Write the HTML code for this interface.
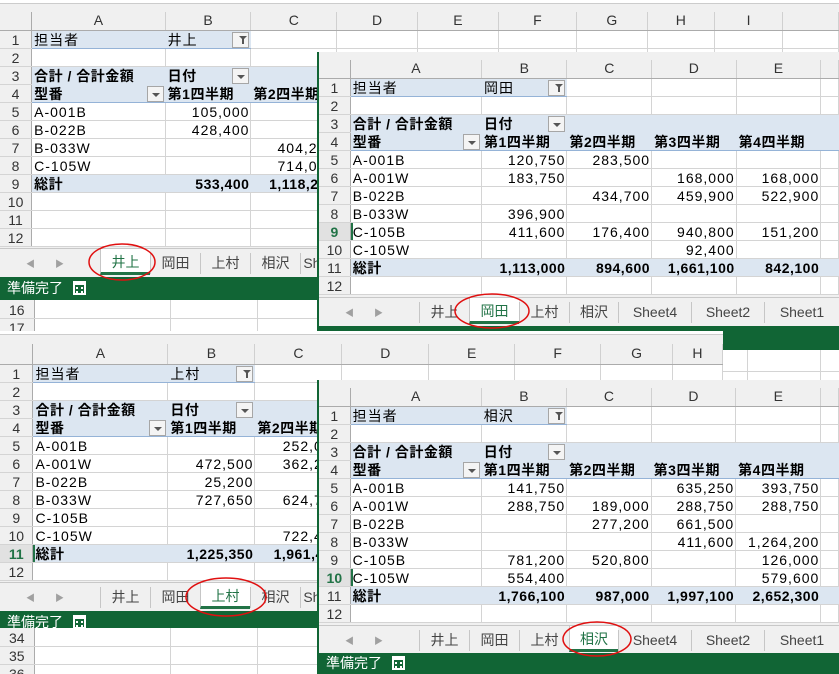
<!DOCTYPE html>
<html><head><meta charset="utf-8">
<style>
*{margin:0;padding:0;box-sizing:border-box}
body{width:839px;height:674px;position:relative;overflow:hidden;background:#f0f0f0;font-family:"Liberation Sans","Noto Sans CJK JP",sans-serif}
.w{position:absolute;overflow:hidden;background:#f0f0f0}
table{position:absolute;border-collapse:collapse;table-layout:fixed;font-size:14px;color:#000;font-family:"Liberation Sans","Noto Sans CJK JP",sans-serif}
tr{height:18px}
td{border-right:1px solid #d4d4d4;border-bottom:1px solid #d4d4d4;padding:0 2px;white-space:nowrap;overflow:hidden;line-height:16px;background:#fff;position:relative;vertical-align:bottom;letter-spacing:1px}
th{background:#f0f0f0;color:#333;font-weight:normal;border-right:1px solid #d0d0d0;border-bottom:1px solid #ababab;font-size:14px;height:18px;line-height:17px}
td.n{background:#f0f0f0;color:#333;text-align:center;border-right:1px solid #ababab;border-bottom:1px solid #d4d4d4;padding:0;letter-spacing:0}
td.h{color:#217346;font-weight:bold;background:#e1e1e1}
td.g{box-shadow:inset 2px 0 0 #217346}
.r{text-align:right;padding-right:1px}
.b{background:#dce6f1;border-right-color:#dce6f1}
.bl{border-bottom-color:#95b3d7}
.bb{border-bottom-color:#dce6f1}
.bt{border-top:1px solid #95b3d7}
.bd{font-weight:bold;letter-spacing:0.5px}
.fb,.dd{position:absolute;right:1px;top:1px;width:17px;height:16px;border:1px solid #a6a6a6;background:#f4f4f4}
.fb:after{content:"";position:absolute;left:6px;top:3px;border-left:4px solid transparent;border-right:4px solid transparent;border-top:4px solid #555}
.fb:before{content:"";position:absolute;left:9px;top:5px;width:2px;height:6px;background:#555}
.dd:after{content:"";position:absolute;left:4px;top:6px;border-left:4px solid transparent;border-right:4px solid transparent;border-top:4px solid #555}
.tabs{position:absolute;left:0;right:0;background:#f0f0f0;border-top:1px solid #c8c8c8;font-size:14px;color:#444}
.tabs span{position:absolute;top:4px;height:21px;line-height:21px;text-align:center;border-left:1px solid #c6c6c6}
.tabs span.a{background:#fff;color:#217346;border-bottom:3px solid #217346;top:0;height:26px;line-height:26px}
.arr{position:absolute;top:8px;color:#a0a0a0;font-size:9px}
.st{position:absolute;left:0;right:0;background:#116535;color:#fff;font-size:14px;line-height:22px;padding-left:7px}
.ic{position:absolute;left:73px;top:4px;width:13px;height:14px;border:2px solid #fff;border-top-width:4px}
.ic:after{content:"";position:absolute;left:1px;top:2px;width:7px;height:2px;border-top:2px dotted #fff;border-bottom:2px dotted #fff}
</style></head><body>

<!-- window 1 -->
<div class="w" style="left:0;top:0;width:839px;height:336px">
<div style="position:absolute;left:0;top:0;width:839px;height:4px;background:#fff;border-bottom:1px solid #ccc"></div>
<table style="left:0;top:12px">
<colgroup><col style="width:33px"><col style="width:136px"><col style="width:87px"><col style="width:87px"><col style="width:87px"><col style="width:87px"><col style="width:84px"><col style="width:76px"><col style="width:72px"><col style="width:74px"><col style="width:60px"></colgroup>
<tr><th style="border-right-color:#ababab"></th><th>A</th><th>B</th><th>C</th><th>D</th><th>E</th><th>F</th><th>G</th><th>H</th><th>I</th><th></th></tr>
<tr><td class="n">1</td><td class="b bl">担当者</td><td class="b bl">井上<span class="fb"></span></td><td></td><td></td><td></td><td></td><td></td><td></td><td></td><td></td></tr>
<tr><td class="n">2</td><td></td><td></td><td></td><td></td><td></td><td></td><td></td><td></td><td></td><td></td></tr>
<tr><td class="n">3</td><td class="b bb bd">合計 / 合計金額</td><td class="b bb bd">日付<span class="dd"></span></td><td class="b bb"></td><td class="b bb"></td><td></td><td></td><td></td><td></td><td></td><td></td></tr>
<tr><td class="n">4</td><td class="b bl bd">型番<span class="dd"></span></td><td class="b bl bd">第1四半期</td><td class="b bl bd">第2四半期</td><td class="b bl"></td><td></td><td></td><td></td><td></td><td></td><td></td></tr>
<tr><td class="n">5</td><td>A-001B</td><td class="r">105,000</td><td></td><td></td><td></td><td></td><td></td><td></td><td></td><td></td></tr>
<tr><td class="n">6</td><td>B-022B</td><td class="r">428,400</td><td></td><td></td><td></td><td></td><td></td><td></td><td></td><td></td></tr>
<tr><td class="n">7</td><td>B-033W</td><td></td><td class="r">404,250</td><td></td><td></td><td></td><td></td><td></td><td></td><td></td></tr>
<tr><td class="n">8</td><td>C-105W</td><td></td><td class="r">714,000</td><td></td><td></td><td></td><td></td><td></td><td></td><td></td></tr>
<tr><td class="n">9</td><td class="b bd">総計</td><td class="b bd r">533,400</td><td class="b bd r">1,118,250</td><td class="b"></td><td></td><td></td><td></td><td></td><td></td><td></td></tr>
<tr><td class="n">10</td><td></td><td></td><td></td><td></td><td></td><td></td><td></td><td></td><td></td><td></td></tr>
<tr><td class="n">11</td><td></td><td></td><td></td><td></td><td></td><td></td><td></td><td></td><td></td><td></td></tr>
<tr><td class="n">12</td><td></td><td></td><td></td><td></td><td></td><td></td><td></td><td></td><td></td><td></td></tr>
</table>
<div class="tabs" style="top:248px;height:29px"><b class="arr" style="left:26px">◀</b><b class="arr" style="left:55px">▶</b>
<span class="a" style="left:100px;width:50px">井上</span><span style="left:150px;width:50px">岡田</span><span style="left:200px;width:50px">上村</span><span style="left:250px;width:50px">相沢</span><span style="left:300px;width:50px">Sheet4</span></div>
<div class="st" style="top:277px;height:23px">準備完了<i class="ic"></i></div>
<table style="left:0;top:300px">
<colgroup><col style="width:34px"><col style="width:136px"><col style="width:87px"><col style="width:87px"></colgroup>
<tr><td class="n">16</td><td></td><td></td><td></td></tr>
<tr><td class="n">17</td><td></td><td></td><td></td></tr>
</table>
</div>

<!-- window 2 -->
<div class="w" style="left:317px;top:52px;width:522px;height:298px;border-left:2px solid #116535">
<table style="left:0;top:8px">
<colgroup><col style="width:34px"><col style="width:136px"><col style="width:88px"><col style="width:87px"><col style="width:87px"><col style="width:87px"><col style="width:20px"></colgroup>
<tr><th style="border-right-color:#ababab"></th><th>A</th><th>B</th><th>C</th><th>D</th><th>E</th><th></th></tr>
<tr><td class="n">1</td><td class="b bl">担当者</td><td class="b bl">岡田<span class="fb"></span></td><td></td><td></td><td></td><td></td></tr>
<tr><td class="n">2</td><td></td><td></td><td></td><td></td><td></td><td></td></tr>
<tr><td class="n">3</td><td class="b bb bd">合計 / 合計金額</td><td class="b bb bd">日付<span class="dd"></span></td><td class="b bb"></td><td class="b bb"></td><td class="b bb"></td><td class="b bb"></td></tr>
<tr><td class="n">4</td><td class="b bl bd">型番<span class="dd"></span></td><td class="b bl bd">第1四半期</td><td class="b bl bd">第2四半期</td><td class="b bl bd">第3四半期</td><td class="b bl bd">第4四半期</td><td class="b bl"></td></tr>
<tr><td class="n">5</td><td>A-001B</td><td class="r">120,750</td><td class="r">283,500</td><td></td><td></td><td></td></tr>
<tr><td class="n">6</td><td>A-001W</td><td class="r">183,750</td><td></td><td class="r">168,000</td><td class="r">168,000</td><td></td></tr>
<tr><td class="n">7</td><td>B-022B</td><td></td><td class="r">434,700</td><td class="r">459,900</td><td class="r">522,900</td><td></td></tr>
<tr><td class="n">8</td><td>B-033W</td><td class="r">396,900</td><td></td><td></td><td></td><td></td></tr>
<tr><td class="n h">9</td><td class="g">C-105B</td><td class="r">411,600</td><td class="r">176,400</td><td class="r">940,800</td><td class="r">151,200</td><td></td></tr>
<tr><td class="n">10</td><td>C-105W</td><td></td><td></td><td class="r">92,400</td><td></td><td></td></tr>
<tr><td class="n">11</td><td class="b bt bd">総計</td><td class="b bt bd r">1,113,000</td><td class="b bt bd r">894,600</td><td class="b bt bd r">1,661,100</td><td class="b bt bd r">842,100</td><td class="b bt"></td></tr>
<tr><td class="n">12</td><td></td><td></td><td></td><td></td><td></td><td></td></tr>
</table>
<div class="tabs" style="top:245px;height:29px"><b class="arr" style="left:26px">◀</b><b class="arr" style="left:55px">▶</b>
<span style="left:100px;width:50px">井上</span><span class="a" style="left:150px;width:50px">岡田</span><span style="left:200px;width:50px">上村</span><span style="left:250px;width:49px">相沢</span><span style="left:299px;width:73px">Sheet4</span><span style="left:372px;width:73px">Sheet2</span><span style="left:445px;width:75px">Sheet1</span></div>
<div class="st" style="top:274px;height:24px"></div>
</div>

<!-- behind strip right -->
<div style="position:absolute;left:723px;top:350px;width:116px;height:30px;background:#fff">
<div style="position:absolute;left:0;top:21px;width:116px;border-top:1px solid #d4d4d4"></div>
<div style="position:absolute;left:24px;top:0;height:30px;border-left:1px solid #d4d4d4"></div>
<div style="position:absolute;left:97px;top:0;height:30px;border-left:1px solid #d4d4d4"></div>
</div>

<!-- window 3 -->
<div class="w" style="left:0;top:331px;width:723px;height:343px">
<div style="position:absolute;left:0;top:0;width:723px;height:4px;background:#fff;border-bottom:1px solid #ccc"></div>
<table style="left:0;top:13px">
<colgroup><col style="width:33px"><col style="width:135px"><col style="width:87px"><col style="width:87px"><col style="width:87px"><col style="width:86px"><col style="width:86px"><col style="width:72px"><col style="width:50px"></colgroup>
<tr style="height:20px"><th style="border-right-color:#ababab"></th><th>A</th><th>B</th><th>C</th><th>D</th><th>E</th><th>F</th><th>G</th><th>H</th></tr>
<tr><td class="n">1</td><td class="b bl">担当者</td><td class="b bl">上村<span class="fb"></span></td><td></td><td></td><td></td><td></td><td></td><td></td></tr>
<tr><td class="n">2</td><td></td><td></td><td></td><td></td><td></td><td></td><td></td><td></td></tr>
<tr><td class="n">3</td><td class="b bb bd">合計 / 合計金額</td><td class="b bb bd">日付<span class="dd"></span></td><td class="b bb"></td><td class="b bb"></td><td></td><td></td><td></td><td></td></tr>
<tr><td class="n">4</td><td class="b bl bd">型番<span class="dd"></span></td><td class="b bl bd">第1四半期</td><td class="b bl bd">第2四半期</td><td class="b bl"></td><td></td><td></td><td></td><td></td></tr>
<tr><td class="n">5</td><td>A-001B</td><td></td><td class="r">252,000</td><td></td><td></td><td></td><td></td><td></td></tr>
<tr><td class="n">6</td><td>A-001W</td><td class="r">472,500</td><td class="r">362,250</td><td></td><td></td><td></td><td></td><td></td></tr>
<tr><td class="n">7</td><td>B-022B</td><td class="r">25,200</td><td></td><td></td><td></td><td></td><td></td><td></td></tr>
<tr><td class="n">8</td><td>B-033W</td><td class="r">727,650</td><td class="r">624,750</td><td></td><td></td><td></td><td></td><td></td></tr>
<tr><td class="n">9</td><td>C-105B</td><td></td><td></td><td></td><td></td><td></td><td></td><td></td></tr>
<tr><td class="n">10</td><td>C-105W</td><td></td><td class="r">722,400</td><td></td><td></td><td></td><td></td><td></td></tr>
<tr><td class="n h">11</td><td class="b bt bd g">総計</td><td class="b bt bd r">1,225,350</td><td class="b bt bd r">1,961,400</td><td class="b bt"></td><td></td><td></td><td></td><td></td></tr>
<tr><td class="n">12</td><td></td><td></td><td></td><td></td><td></td><td></td><td></td><td></td></tr>
</table>
<div class="tabs" style="top:251px;height:29px"><b class="arr" style="left:26px">◀</b><b class="arr" style="left:55px">▶</b>
<span style="left:100px;width:50px">井上</span><span style="left:150px;width:50px">岡田</span><span class="a" style="left:200px;width:50px">上村</span><span style="left:250px;width:50px">相沢</span><span style="left:300px;width:50px">Sheet4</span></div>
<div class="st" style="top:280px;height:23px">準備完了<i class="ic"></i></div>
<table style="left:0;top:297px">
<colgroup><col style="width:34px"><col style="width:136px"><col style="width:87px"><col style="width:87px"></colgroup>
<tr><td class="n">34</td><td></td><td></td><td></td></tr>
<tr><td class="n">35</td><td></td><td></td><td></td></tr>
<tr><td class="n">36</td><td></td><td></td><td></td></tr>
</table>
</div>

<!-- window 4 -->
<div class="w" style="left:317px;top:380px;width:522px;height:294px;border-left:2px solid #116535">
<table style="left:0;top:8px">
<colgroup><col style="width:34px"><col style="width:136px"><col style="width:88px"><col style="width:87px"><col style="width:87px"><col style="width:87px"><col style="width:20px"></colgroup>
<tr><th style="border-right-color:#ababab"></th><th>A</th><th>B</th><th>C</th><th>D</th><th>E</th><th></th></tr>
<tr><td class="n">1</td><td class="b bl">担当者</td><td class="b bl">相沢<span class="fb"></span></td><td></td><td></td><td></td><td></td></tr>
<tr><td class="n">2</td><td></td><td></td><td></td><td></td><td></td><td></td></tr>
<tr><td class="n">3</td><td class="b bb bd">合計 / 合計金額</td><td class="b bb bd">日付<span class="dd"></span></td><td class="b bb"></td><td class="b bb"></td><td class="b bb"></td><td class="b bb"></td></tr>
<tr><td class="n">4</td><td class="b bl bd">型番<span class="dd"></span></td><td class="b bl bd">第1四半期</td><td class="b bl bd">第2四半期</td><td class="b bl bd">第3四半期</td><td class="b bl bd">第4四半期</td><td class="b bl"></td></tr>
<tr><td class="n">5</td><td>A-001B</td><td class="r">141,750</td><td></td><td class="r">635,250</td><td class="r">393,750</td><td></td></tr>
<tr><td class="n">6</td><td>A-001W</td><td class="r">288,750</td><td class="r">189,000</td><td class="r">288,750</td><td class="r">288,750</td><td></td></tr>
<tr><td class="n">7</td><td>B-022B</td><td></td><td class="r">277,200</td><td class="r">661,500</td><td></td><td></td></tr>
<tr><td class="n">8</td><td>B-033W</td><td></td><td></td><td class="r">411,600</td><td class="r">1,264,200</td><td></td></tr>
<tr><td class="n">9</td><td>C-105B</td><td class="r">781,200</td><td class="r">520,800</td><td></td><td class="r">126,000</td><td></td></tr>
<tr><td class="n h">10</td><td class="g">C-105W</td><td class="r">554,400</td><td></td><td></td><td class="r">579,600</td><td></td></tr>
<tr><td class="n">11</td><td class="b bt bd">総計</td><td class="b bt bd r">1,766,100</td><td class="b bt bd r">987,000</td><td class="b bt bd r">1,997,100</td><td class="b bt bd r">2,652,300</td><td class="b bt"></td></tr>
<tr><td class="n">12</td><td></td><td></td><td></td><td></td><td></td><td></td></tr>
</table>
<div class="tabs" style="top:245px;height:29px"><b class="arr" style="left:26px">◀</b><b class="arr" style="left:55px">▶</b>
<span style="left:100px;width:50px">井上</span><span style="left:150px;width:50px">岡田</span><span style="left:200px;width:50px">上村</span><span class="a" style="left:250px;width:49px">相沢</span><span style="left:299px;width:73px">Sheet4</span><span style="left:372px;width:73px">Sheet2</span><span style="left:445px;width:75px">Sheet1</span></div>
<div class="st" style="top:273px;height:21px;line-height:21px">準備完了<i class="ic" style="top:3px"></i></div>
</div>

<svg style="position:absolute;left:0;top:0" width="839" height="674">
<g fill="none" stroke="#e01010" stroke-width="1.5">
<ellipse cx="122" cy="262" rx="33" ry="18"/>
<ellipse cx="492" cy="311" rx="37" ry="17"/>
<ellipse cx="226" cy="597" rx="40" ry="19"/>
<ellipse cx="597" cy="639" rx="34" ry="17"/>
</g></svg>
</body></html>
